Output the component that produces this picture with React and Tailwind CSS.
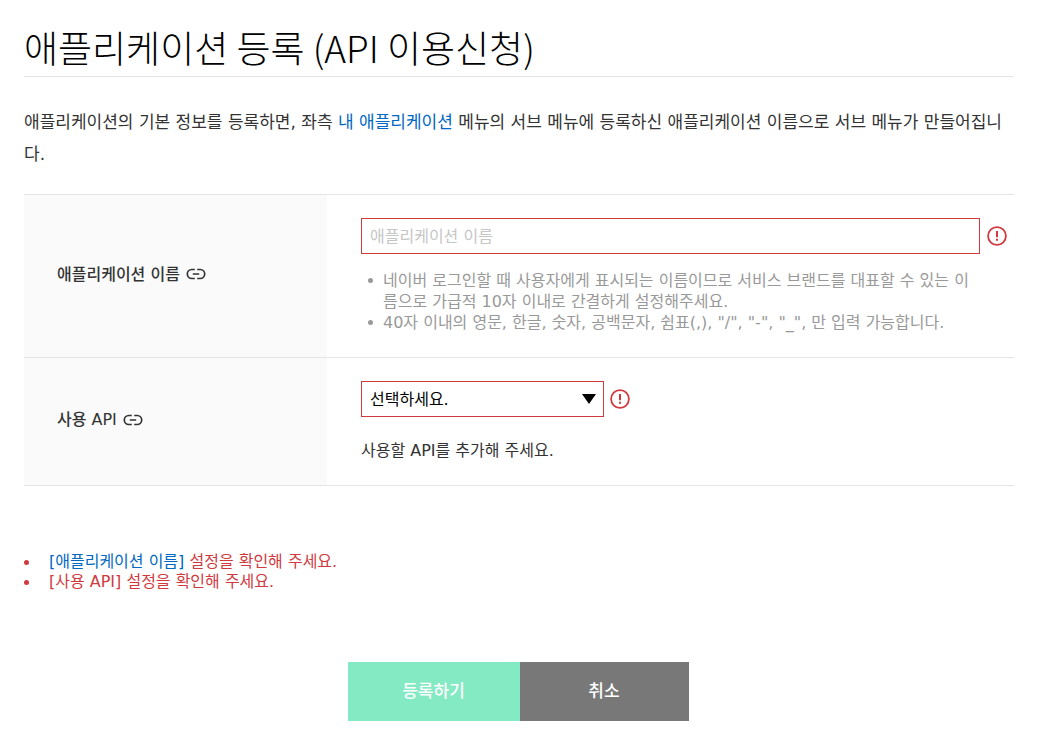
import React from "react";

function LinkIcon() {
  return (
    <svg viewBox="0 0 20 12" className="h-3 w-5" fill="none" stroke="currentColor" strokeWidth="1.7" aria-hidden="true">
      <path d="M8.8 1.5H5.8a4.5 4.5 0 0 0 0 9h3M11.2 1.5h3a4.5 4.5 0 0 1 0 9h-3M6.8 6h6.4" />
    </svg>
  );
}

function AlertIcon() {
  return (
    <svg viewBox="0 0 20 20" className="size-5 shrink-0 text-[#d03a3f]" fill="none" stroke="currentColor" aria-hidden="true">
      <circle cx="10" cy="10" r="8.9" strokeWidth="1.8" />
      <path d="M10 5v6.2M10 12.8v2" strokeWidth="2" />
    </svg>
  );
}

function Row({ id, label, children }) {
  return (
    <div className="flex border-b border-[#e5e5e5]">
      <div className="flex w-[303px] shrink-0 items-center gap-1.5 bg-[#fafafa] pb-1 pl-[33px]">
        <label htmlFor={id} className="font-medium">
          {label}
        </label>
        <a href={"#" + id} aria-label={label}>
          <LinkIcon />
        </a>
      </div>
      <div className="min-w-0 flex-1 pt-[23px] pr-[7px] pb-6 pl-[34px]">{children}</div>
    </div>
  );
}

function Bullet({ wide, children }) {
  return (
    <li className={wide ? "flex gap-5" : "flex gap-2.5"}>
      <span className="mt-2 size-[5px] shrink-0 rounded-full bg-current" />
      <span>{children}</span>
    </li>
  );
}

export default function App() {
  return (
    <main className="bg-white pt-6 pr-[31px] pb-6 pl-6 font-['DejaVu_Sans','Noto_Sans_CJK_KR',sans-serif] text-base leading-[21px] text-[#333]">
      <h1 className="border-b border-[#e5e5e5] pb-1.5 font-['Noto_Sans_CJK_KR',sans-serif] text-[37px] leading-[46px] font-light text-black">
        애플리케이션 등록 (API 이용신청)
      </h1>
      <p className="mt-[29px] text-[17px] leading-8">
        애플리케이션의 기본 정보를 등록하면, 좌측{" "}
        <a href="#apps" className="text-[#0068c3]">
          내 애플리케이션
        </a>{" "}
        메뉴의 서브 메뉴에 등록하신 애플리케이션 이름으로 서브 메뉴가 만들어집니다.
      </p>

      <form>
        <div className="mt-6 border-t border-[#e5e5e5]">
          <Row id="app-name" label="애플리케이션 이름">
            <div className="flex items-center gap-[7px]">
              <input
                id="app-name"
                type="text"
                placeholder="애플리케이션 이름"
                className="h-9 min-w-0 flex-1 border border-[#d03a3f] px-2 outline-none placeholder:text-[#c6c6c6]"
              />
              <AlertIcon />
            </div>
            <ul className="mt-4 mr-7 pl-[7px] text-[#999]">
              <Bullet>
                네이버 로그인할 때 사용자에게 표시되는 이름이므로 서비스 브랜드를 대표할 수 있는 이름으로 가급적 10자 이내로
                간결하게 설정해주세요.
              </Bullet>
              <Bullet>40자 이내의 영문, 한글, 숫자, 공백문자, 쉼표(,), "/", "-", "_", 만 입력 가능합니다.</Bullet>
            </ul>
          </Row>
          <Row id="api" label="사용 API">
            <div className="flex items-center gap-1.5">
              <div className="relative w-[243px]">
                <select
                  id="api"
                  className="block h-9 w-full appearance-none border border-[#d03a3f] bg-white px-2 text-black outline-none"
                >
                  <option>선택하세요.</option>
                </select>
                <svg
                  viewBox="0 0 14 10"
                  className="pointer-events-none absolute top-1/2 right-2 h-2.5 w-3.5 -translate-y-1/2"
                  aria-hidden="true"
                >
                  <path d="M0 0h14L7 10z" fill="#000" />
                </svg>
              </div>
              <AlertIcon />
            </div>
            <p className="mt-[23px]">사용할 API를 추가해 주세요.</p>
          </Row>
        </div>

        <ul className="mt-[66px] leading-5 text-[#d03a3f]">
          <Bullet wide>
            <a href="#app-name" className="text-[#0068c3]">
              [애플리케이션 이름]
            </a>{" "}
            설정을 확인해 주세요.
          </Bullet>
          <Bullet wide>[사용 API] 설정을 확인해 주세요.</Bullet>
        </ul>

        <div className="mt-[70px] flex justify-center pr-0.5 text-[17px] font-medium text-white">
          <button type="submit" className="h-[59px] w-[172px] bg-[#84eac4]">
            등록하기
          </button>
          <button type="button" className="h-[59px] w-[169px] bg-[#787878]">
            취소
          </button>
        </div>
      </form>
    </main>
  );
}
